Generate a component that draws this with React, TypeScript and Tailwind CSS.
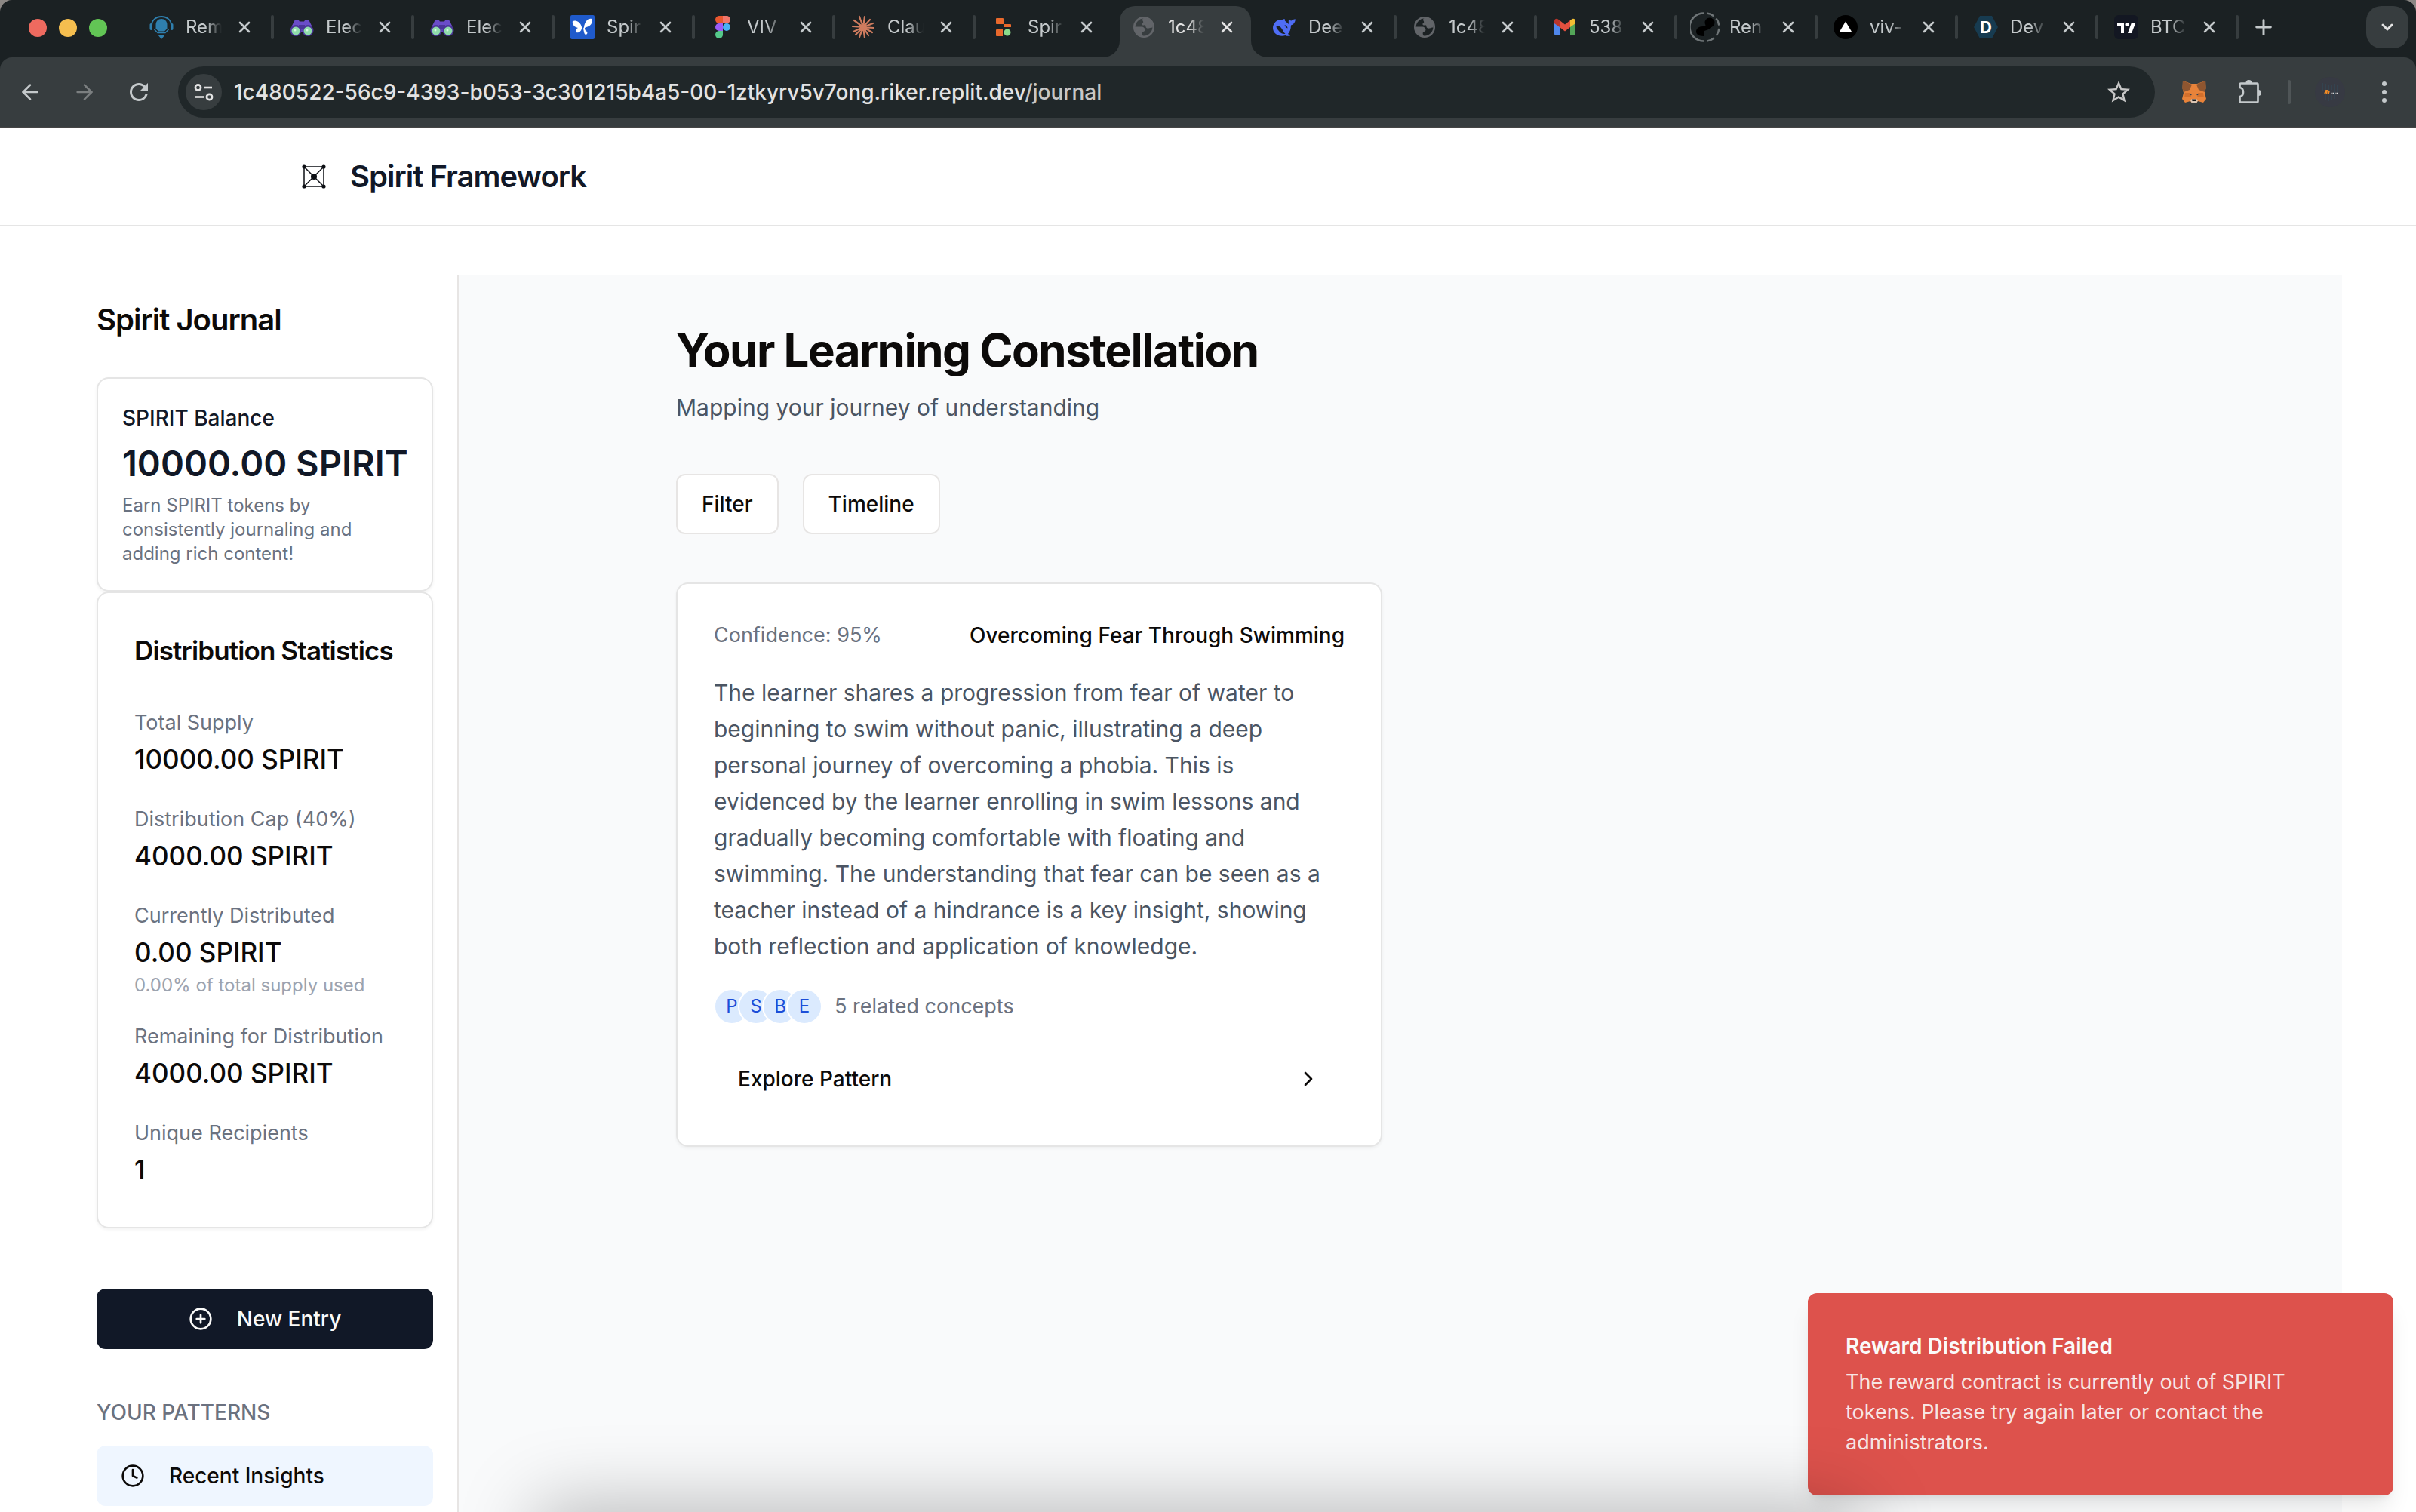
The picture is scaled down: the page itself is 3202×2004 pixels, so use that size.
import React from "react";
import {
  ArrowLeft,
  ArrowRight,
  ChevronDown,
  ChevronRight,
  CirclePlus,
  Clock,
  Plus,
  X,
} from "lucide-react";
import { MdStarBorder, MdRefresh } from "react-icons/md";

/* ---------- Favicons ---------- */

const iconClass = "h-8 w-8 shrink-0";

function KnightIcon() {
  return (
    <svg className={iconClass} viewBox="0 0 32 32" fill="none">
      <path d="M3 14C3 6.500 9 2 16 2s13 4.500 13 12" stroke="#2f7fae" strokeWidth="1.800" />
      <rect x="0.500" y="11" width="3.500" height="9" rx="1.700" fill="#2f7fae" />
      <rect x="28" y="11" width="3.500" height="9" rx="1.700" fill="#2f7fae" />
      <path d="M16 5c4.500 0 7.500 3.500 7.500 8v5l-3.500 3.500h-8L8.500 18v-5c0-4.500 3-8 7.500-8Z" fill="#2f7fae" />
      <path d="M6.500 19l4.500 4.500h10l4.500-4.500" stroke="#2f7fae" strokeWidth="1.500" />
      <path d="M11 26h10l-5 6Z" fill="#2f7fae" />
    </svg>
  );
}

function BinocularsIcon() {
  return (
    <svg className={iconClass} viewBox="0 0 32 32">
      <path
        d="M3 14 6 8c.5-2 4-3 6-1l1 1.500h6L20 7c2-2 5.500-1 6 1l3 6v8H3Z"
        fill="#6a4cc8"
      />
      <path d="M12 13h8v6h-8Z" fill="#4b3599" />
      <circle cx="8" cy="20.500" r="7.500" fill="#4b3599" />
      <circle cx="24" cy="20.500" r="7.500" fill="#4b3599" />
      <circle cx="8" cy="21" r="5.500" fill="#8fdcab" />
      <circle cx="24" cy="21" r="5.500" fill="#8fdcab" />
      <circle cx="7" cy="20" r="1.500" fill="#d8f7e3" />
      <circle cx="23" cy="20" r="1.500" fill="#d8f7e3" />
    </svg>
  );
}

function ButterflyIcon() {
  return (
    <svg className={iconClass} viewBox="0 0 32 32">
      <rect width="32" height="32" rx="2" fill="#1f5acb" />
      <path
        d="M15 16C14 10 8 6 3 8c-1 4 2 8 7 9-3 1-4 4-2 6 3 1 6-1 7-5Zm3 0c1-7 5-12 10-11 2 5-1 10-7 11l-2 1c0 3 1 4 3 5 1 2 0 4-2 4-2-1-2-4-3-8Z"
        fill="#fff"
      />
    </svg>
  );
}

function FigmaIcon() {
  return (
    <svg className={iconClass} viewBox="0 0 32 32">
      <path d="M16 1h-5a5 5 0 0 0 0 10h5Z" fill="#e8572f" />
      <path d="M16 1h5a5 5 0 0 1 0 10h-5Z" fill="#f1766a" />
      <path d="M16 11h-5a5 5 0 0 0 0 10h5Z" fill="#9b5cf6" />
      <circle cx="21" cy="16" r="5" fill="#49b1f5" />
      <path d="M16 21h-5a5 5 0 1 0 5 5Z" fill="#55c98b" />
    </svg>
  );
}

function BurstIcon() {
  return (
    <svg className={iconClass} viewBox="0 0 32 32" stroke="#cf7c5f" strokeWidth="2.200" strokeLinecap="round">
      <path d="M16 16 11 2M16 16 18 2M16 16l9-10M16 16l13-5M16 16l14 1M16 16l12 7M16 16l7 11M16 16l2 14M16 16l-5 13M16 16 6 26M16 16 3 22M16 16 2 15M16 16 4 7" />
      <circle cx="16" cy="16" r="3" fill="#cf7c5f" />
    </svg>
  );
}

function BlocksIcon() {
  return (
    <svg className={iconClass} viewBox="0 0 32 32">
      <path d="M7 4h8a1 1 0 0 1 1 1v7H7a1 1 0 0 1-1-1V5a1 1 0 0 1 1-1Z" fill="#e9692c" />
      <path d="M16 12h9a1 1 0 0 1 1 1v3H16Z" fill="#e9692c" />
      <path d="M7 19h8v9H7a1 1 0 0 1-1-1v-7a1 1 0 0 1 1-1Z" fill="#e9692c" />
      <circle cx="21" cy="23" r="4.500" fill="#8bdc8b" />
    </svg>
  );
}

function GlobeIcon() {
  return (
    <svg className={iconClass} viewBox="0 0 32 32" fill="none">
      <circle cx="16" cy="16" r="12.700" stroke="#626569" strokeWidth="2.600" />
      <path
        d="M17 3.500c-3 1-3.500 2.500-2.500 4s1 2.500-.5 3.500 0 3 2 2.500 2.500.5 2.500 2 2 2.500 4 2 3-1 5-1C29 9 24 4 17 3.500Z"
        fill="#626569"
      />
      <path
        d="M3.500 15.500H13c2.500 0 4.500 2 4.500 4s-2 2.500-3 3-1 2.500-.5 3.500l1 2.500C8 28 3.500 23 3.500 15.500Z"
        fill="#626569"
      />
    </svg>
  );
}

function WhaleIcon() {
  return (
    <svg className={iconClass} viewBox="0 0 32 32">
      <path
        d="M3 11c2-3.500 6-5.500 10-4.500 1-1 2.500-1.500 4-1-.7 1-.3 2 1 3 1.500 1.200 3 3 4.500 3.500-1-2.500-1-5 .2-7.500.3 2 1.300 3 2.800 3 1.500-1.500 3-2 5.500-2-.5 4-2.500 7-6 8-.2 5-1.500 9-4 11.500l3 2.500c-2 .6-4.500.5-6.500-.5C9.500 29.500 1 25 1 17c0-2.500.8-4.500 2-6Z"
        fill="#4f6df5"
      />
      <path d="M5.500 14.500c3.500-1 6.500 1.500 8.500 5.500 1 2 2.500 4 3.500 5-3.500.5-6.500-1-9-4.500-1.500-2-3-3-3-6Z" fill="#1b2123" />
      <path d="M16.500 13c2.500.5 4 2.500 4 4.500-1.500-.5-3-2-4-4.500Z" fill="#1b2123" />
    </svg>
  );
}

function MailIcon() {
  return (
    <svg className={iconClass} viewBox="0 0 32 32">
      <path d="M2 10v15a2 2 0 0 0 2 2h5V14Z" fill="#4f87ec" />
      <path d="M30 10v15a2 2 0 0 1-2 2h-5V14Z" fill="#53a658" />
      <path d="M2 8c0-3 3-4 5-2.500L9 7v9l-7-5Z" fill="#b9342a" />
      <path d="M30 8c0-3-3-4-5-2.500L23 7v9l7-5Z" fill="#f1bd33" />
      <path d="M9 7l7 5.500L23 7v9l-7 5.500L9 16Z" fill="#e2503f" />
    </svg>
  );
}

function LoadingIcon() {
  return (
    <svg className="-mx-1 h-10 w-10 shrink-0" viewBox="0 0 40 40" fill="none">
      <path d="M18 1.500A18.500 18.500 0 0 0 18 38.500" stroke="#6f7577" strokeWidth="2.500" />
      <path
        d="M22 1.500A18.500 18.500 0 0 1 38.500 20 18.500 18.500 0 0 1 22 38.500"
        stroke="#6f7577"
        strokeWidth="2.500"
        strokeDasharray="10 4.500"
      />
      <circle cx="26" cy="14" r="6.500" fill="#000" />
      <path d="M21 15c0 3-1 4-4 4-6 0-9 3-9 7 0 3 3 6 10 6l1-7c4-1 8-3 9-6Z" fill="#000" />
    </svg>
  );
}

function TriangleIcon() {
  return (
    <svg className={iconClass} viewBox="0 0 32 32">
      <circle cx="16" cy="16" r="16" fill="#000" />
      <path d="M16 8.500 24 22H8Z" fill="#fff" />
    </svg>
  );
}

function HexIcon() {
  return (
    <span className="relative flex h-8 w-8 shrink-0 items-center justify-center">
      <svg className="absolute inset-0 h-8 w-8" viewBox="0 0 32 32">
        <path d="M8 1h16l8 15-8 15H8L0 16Z" fill="#173b50" />
      </svg>
      <span className="relative text-[22px] leading-8 font-bold text-white">D</span>
    </span>
  );
}

function ChartLogoIcon() {
  return (
    <svg className={iconClass} viewBox="0 0 32 32">
      <rect width="32" height="32" rx="6" fill="#131722" />
      <path d="M4 10h9v14H9v-9H4Z" fill="#fff" />
      <circle cx="17" cy="12.500" r="2.500" fill="#fff" />
      <path d="M23 10h5.500L23 24h-5Z" fill="#fff" />
    </svg>
  );
}

/* ---------- Toolbar icons ---------- */

function FoxIcon() {
  return (
    <svg className="h-8 w-8" viewBox="0 0 32 32">
      <path d="M1 1l11 4h8l11-4 .5 10-1.500 6 2 8-4 5-7-2-2 2.500h-6L11 28l-7 2-4-5 2-8-1.500-6Z" fill="#e8833a" />
      <path d="M1 1l12 5-3 7-8 3-1.500-5Z" fill="#8f5630" />
      <path d="M31 1 19 6l3 7 8 3 1.500-5Z" fill="#8f5630" />
      <path d="M4 17l7 0 1 6-9 0Zm24 0-7 0-1 6 9 0Z" fill="#d4702c" />
      <path d="M9 18l4 .5-1 2Zm14 0-4 .5 1 2Z" fill="#2b3f52" />
      <path d="M11 27l2-2h6l2 2-2 4h-6Z" fill="#d8c5b4" />
      <path d="M13 25.500h6l-.5 2.500h-5Z" fill="#161616" />
    </svg>
  );
}

function PuzzleIcon() {
  return (
    <svg className="h-9 w-9" viewBox="0 0 36 36">
      <path
        d="M4.500 12V8a1.500 1.500 0 0 1 1.500-1.500h21A1.500 1.500 0 0 1 28.500 8v22a1.500 1.500 0 0 1-1.500 1.500H6A1.500 1.500 0 0 1 4.500 30v-6c6-1 6-11 0-12Z"
        fill="none"
        stroke="#c4c9cb"
        strokeWidth="2.700"
        strokeLinejoin="round"
      />
      <path d="M12.500 6a4 4 0 0 1 8 0ZM29 15a4 4 0 0 1 0 8Z" fill="#c4c9cb" />
    </svg>
  );
}

function SiteInfoIcon() {
  return (
    <svg className="h-7 w-7" viewBox="0 0 28 28" fill="none" stroke="#e3e3e3" strokeWidth="2.600">
      <circle cx="6.500" cy="8" r="3.600" />
      <path d="M14 8h11" />
      <circle cx="21.500" cy="20.500" r="3.600" />
      <path d="M3 20.500h11" />
    </svg>
  );
}

function NodesLogo() {
  return (
    <svg className="h-8 w-8" viewBox="0 0 32 32" fill="none" stroke="#0c0f14" strokeWidth="1.500">
      <path d="M3 3h26v26H3ZM3 3l26 26M29 3 3 29" />
      <g fill="#0c0f14" stroke="none">
        <circle cx="3" cy="3" r="2.600" />
        <circle cx="29" cy="3" r="2.600" />
        <circle cx="3" cy="29" r="2.600" />
        <circle cx="29" cy="29" r="2.600" />
        <circle cx="16" cy="16" r="4" />
      </g>
    </svg>
  );
}

/* ---------- Browser chrome ---------- */

type TabData = { title: string; icon: () => React.ReactElement; active?: boolean; divider?: boolean };

const tabs: TabData[] = [
  { title: "Rem", icon: KnightIcon, divider: true },
  { title: "Elec", icon: BinocularsIcon, divider: true },
  { title: "Elec", icon: BinocularsIcon, divider: true },
  { title: "Spir", icon: ButterflyIcon, divider: true },
  { title: "VIV", icon: FigmaIcon, divider: true },
  { title: "Clau", icon: BurstIcon, divider: true },
  { title: "Spir", icon: BlocksIcon },
  { title: "1c48", icon: GlobeIcon, active: true },
  { title: "Dee", icon: WhaleIcon, divider: true },
  { title: "1c48", icon: GlobeIcon, divider: true },
  { title: "538", icon: MailIcon, divider: true },
  { title: "Ren", icon: LoadingIcon, divider: true },
  { title: "viv-", icon: TriangleIcon, divider: true },
  { title: "Dev", icon: HexIcon, divider: true },
  { title: "BTC", icon: ChartLogoIcon, divider: true },
];

function Tab({ tab }: { tab: TabData }) {
  const Icon = tab.icon;
  return (
    <div className="relative flex h-full w-[186px] items-center pb-1 pl-[22px]">
      {tab.active && (
        <>
          <span className="absolute inset-x-[6px] top-2 bottom-0 rounded-t-[20px] bg-[#373d3f]" />
          <svg className="absolute bottom-0 -left-4 h-[22px] w-[22px]" viewBox="0 0 22 22">
            <path d="M22 0v22H0A22 22 0 0 0 22 0Z" fill="#373d3f" />
          </svg>
          <svg className="absolute -right-4 bottom-0 h-[22px] w-[22px]" viewBox="0 0 22 22">
            <path d="M0 0v22h22A22 22 0 0 1 0 0Z" fill="#373d3f" />
          </svg>
        </>
      )}
      <button className="relative flex items-center gap-4">
        <Icon />
        <span
          className={`w-12 text-left text-[24px] leading-8 whitespace-nowrap [mask-image:linear-gradient(to_right,#000_55%,transparent)] ${
            tab.active ? "text-[#e3e3e3]" : "text-[#c4c9cb]"
          }`}
        >
          {tab.title}
        </span>
      </button>
      <button
        aria-label={`Close ${tab.title}`}
        className={`relative ml-[18px] ${tab.active ? "text-[#e3e3e3]" : "text-[#c4c9cb]"}`}
      >
        <X className="h-6 w-6" strokeWidth={2.6} />
      </button>
      {tab.divider && <span className="absolute top-5 -right-px h-8 w-1 rounded-full bg-[#373d3f]" />}
    </div>
  );
}

function BrowserChrome() {
  return (
    <header className="shrink-0 bg-[#8b8784]">
      <div className="flex h-[76px] items-center rounded-t-[16px] bg-[#1b2123]">
        <div className="flex w-[176px] shrink-0 items-center gap-4 pb-0.5 pl-[38px]">
          <span className="h-6 w-6 rounded-full bg-[#ee6a5f]" />
          <span className="h-6 w-6 rounded-full bg-[#f5be4f]" />
          <span className="h-6 w-6 rounded-full bg-[#62c555]" />
        </div>
        <nav aria-label="Tabs" className="flex h-full">
          {tabs.map((tab, i) => (
            <Tab key={i} tab={tab} />
          ))}
        </nav>
        <button aria-label="New tab" className="ml-[18px] pb-1 text-[#c4c9cb]">
          <Plus className="h-8 w-8" strokeWidth={2.2} />
        </button>
        <button
          aria-label="Search tabs"
          className="mr-[10px] mb-1 ml-auto flex h-14 w-14 items-center justify-center rounded-[20px] bg-[#373d3f] text-[#e3e3e3]"
        >
          <ChevronDown className="h-6 w-6" strokeWidth={3} />
        </button>
      </div>
      <div className="bg-[#1b2123]">
        <div className="flex h-[94px] items-center rounded-t-[16px] border-b-2 border-[#454545] bg-[#373d3f] pr-[26px] pl-6">
          <button aria-label="Back" className="text-[#c4c9cb]">
            <ArrowLeft className="h-8 w-8" strokeWidth={2} />
          </button>
          <button aria-label="Forward" className="ml-10 text-[#7b7f80]">
            <ArrowRight className="h-8 w-8" strokeWidth={2} />
          </button>
          <button aria-label="Reload" className="ml-[38px] text-[#c4c9cb]">
            <MdRefresh className="h-9 w-9" />
          </button>
          <div className="ml-[34px] flex h-[68px] flex-1 items-center rounded-full bg-[#202729] pr-[30px] pl-2.5">
            <button
              aria-label="View site information"
              className="flex h-12 w-12 shrink-0 items-center justify-center rounded-full bg-[#373d3f]"
            >
              <SiteInfoIcon />
            </button>
            <div className="ml-4 flex-1 text-[28px] leading-10 font-medium text-[#e3e3e3]">
              1c480522-56c9-4393-b053-3c301215b4a5-00-1ztkyrv5v7ong.riker.replit.dev
              <span className="text-[#c7c7c7]">/journal</span>
            </div>
            <button aria-label="Bookmark this tab" className="text-[#c7c7c7]">
              <MdStarBorder className="h-9 w-9" />
            </button>
          </div>
          <button aria-label="Wallet" className="ml-9">
            <FoxIcon />
          </button>
          <button aria-label="Extensions" className="ml-10">
            <PuzzleIcon />
          </button>
          <span className="ml-8 h-8 w-1 rounded-full bg-[#4f5557]" />
          <button
            aria-label="Profile"
            className="ml-8 flex h-10 w-10 items-center justify-center rounded-full bg-[#373a43]"
          >
            <svg className="h-8 w-8" viewBox="0 0 32 32" fill="none">
              <path d="M6 4v10M10 5v21M14 6v8M14 20v8M18 6v7M18 20v6M22 5v20M26 6v10" stroke="#34434f" strokeWidth="2" />
              <path d="M9 18l2-4h1l-.5 4M15 14l-1 4" stroke="#f08a24" strokeWidth="1.800" />
              <path d="M17 17.500h9" stroke="#d8d8d8" strokeWidth="1.500" strokeDasharray="1.500 1" />
            </svg>
          </button>
          <button aria-label="Menu" className="ml-9 flex w-8 flex-col items-center gap-[5px]">
            <span className="h-1.5 w-1.5 rounded-full bg-[#c4c9cb]" />
            <span className="h-1.5 w-1.5 rounded-full bg-[#c4c9cb]" />
            <span className="h-1.5 w-1.5 rounded-full bg-[#c4c9cb]" />
          </button>
        </div>
      </div>
    </header>
  );
}

/* ---------- Page ---------- */

const stats = [
  { label: "Total Supply", value: "10000.00 SPIRIT" },
  { label: "Distribution Cap (40%)", value: "4000.00 SPIRIT" },
  { label: "Currently Distributed", value: "0.00 SPIRIT", note: "0.00% of total supply used" },
  { label: "Remaining for Distribution", value: "4000.00 SPIRIT" },
  { label: "Unique Recipients", value: "1" },
];

const cardClass = "rounded-2xl border-2 border-[#e5e5e5] bg-white shadow-[0_2px_4px_rgba(0,0,0,0.05)]";

function Sidebar() {
  return (
    <aside className="w-[512px] shrink-0 border-r-2 border-[#e7e5e4] bg-white p-8">
      <h2 className="text-[40px] leading-[56px] font-semibold tracking-tight text-[#0c0a09]">Spirit Journal</h2>

      <section className={`mt-12 ${cardClass} p-8`}>
        <h3 className="text-[28px] leading-10 font-medium text-[#111827]">SPIRIT Balance</h3>
        <p className="mt-2 text-[47px] leading-[64px] font-semibold whitespace-nowrap text-[#111827]">
          10000.00 SPIRIT
        </p>
        <p className="mt-2 text-[24px] leading-8 text-[#6b7280]">
          Earn SPIRIT tokens by consistently journaling and adding rich content!
        </p>
      </section>

      <section className={`${cardClass} p-12`}>
        <h3 className="text-[35px] leading-[56px] font-semibold tracking-tight whitespace-nowrap text-[#0c0a09]">
          Distribution Statistics
        </h3>
        <dl className="mt-12 flex flex-col gap-8">
          {stats.map((s) => (
            <div key={s.label}>
              <dt className="text-[27px] leading-10 whitespace-nowrap text-[#6b7280]">{s.label}</dt>
              <dd className="text-[35px] leading-[56px] font-medium text-[#0c0a09]">{s.value}</dd>
              {s.note && <dd className="text-[24px] leading-8 text-[#9ca3af]">{s.note}</dd>}
            </div>
          ))}
        </dl>
      </section>

      <button className="mt-20 flex h-20 w-full items-center justify-center gap-8 rounded-xl bg-[#111827] text-[28px] leading-10 font-medium text-[#fafaf9]">
        <CirclePlus className="h-8 w-8" />
        New Entry
      </button>

      <h4 className="mt-16 text-[28px] leading-10 font-medium text-[#6b7280]">YOUR PATTERNS</h4>
      <button className="mt-6 flex h-20 w-full items-center gap-8 rounded-xl bg-[#eff6ff] px-8 text-[28px] leading-10 font-medium text-[#0c0a09]">
        <Clock className="h-8 w-8" />
        Recent Insights
      </button>
    </aside>
  );
}

function PatternCard() {
  return (
    <article className={`${cardClass} p-12`}>
      <div className="flex items-center justify-between leading-10">
        <span className="text-[27px] text-[#6b7280]">Confidence: 95%</span>
        <span className="text-[28px] font-medium text-[#0c0a09]">Overcoming Fear Through Swimming</span>
      </div>
      <p className="mt-8 text-[30px] leading-[48px] text-[#4b5563]">
        The learner shares a progression from fear of water to beginning to swim without panic, illustrating a deep
        personal journey of overcoming a phobia. This is evidenced by the learner enrolling in swim lessons and
        gradually becoming comfortable with floating and swimming. The understanding that fear can be seen as a teacher
        instead of a hindrance is a key insight, showing both reflection and application of knowledge.
      </p>
      <div className="mt-8 flex items-center gap-4">
        <div className="flex -space-x-4">
          {["P", "S", "B", "E"].map((c) => (
            <span
              key={c}
              className="flex h-12 w-12 items-center justify-center rounded-full border-2 border-white bg-[#dbeafe] text-[24px] leading-8 text-[#1d4ed8]"
            >
              {c}
            </span>
          ))}
        </div>
        <span className="text-[27px] leading-10 text-[#6b7280]">5 related concepts</span>
      </div>
      <button className="mt-8 flex h-20 w-full items-center justify-between px-8 text-[28px] leading-10 font-medium text-[#0c0a09]">
        Explore Pattern
        <ChevronRight className="h-8 w-8" />
      </button>
    </article>
  );
}

function Constellation() {
  return (
    <main className="min-w-0 flex-1 bg-[#f9fafb]">
      <div className="mx-auto max-w-[2048px] p-16">
        <h1 className="text-[60px] leading-[72px] font-bold tracking-tight text-[#0c0a09]">
          Your Learning Constellation
        </h1>
        <p className="mt-4 text-[30px] leading-[48px] text-[#4b5563]">Mapping your journey of understanding</p>
        <div className="mt-16 flex gap-8">
          {["Filter", "Timeline"].map((label) => (
            <button
              key={label}
              className="h-20 rounded-xl border-2 border-[#e7e5e4] bg-white px-8 text-[28px] leading-10 font-medium text-[#0c0a09]"
            >
              {label}
            </button>
          ))}
        </div>
        <div className="mt-16 grid grid-cols-2 gap-12">
          <PatternCard />
        </div>
      </div>
    </main>
  );
}

function Toast() {
  return (
    <div
      role="alert"
      className="absolute right-[30px] bottom-[22px] w-[776px] rounded-xl border-2 border-[#dd524c] bg-[#dd524c] p-12 shadow-[0_20px_30px_-6px_rgba(0,0,0,0.1),0_8px_12px_-8px_rgba(0,0,0,0.1)]"
    >
      <p className="text-[28px] leading-10 font-semibold text-[#fafafa]">Reward Distribution Failed</p>
      <p className="mt-2 pr-12 text-[27px] leading-10 text-[#fafafa]/90">
        The reward contract is currently out of SPIRIT tokens. Please try again later or contact the administrators.
      </p>
    </div>
  );
}

export default function App() {
  return (
    <div className="relative flex h-screen flex-col overflow-hidden bg-white font-['Inter',sans-serif]">
      <BrowserChrome />
      <div className="flex h-[130px] shrink-0 items-center border-b-2 border-[#e5e5e5] pl-[400px]">
        <a href="#" className="flex items-center gap-8">
          <NodesLogo />
          <span className="text-[40px] leading-[56px] font-semibold tracking-tight text-[#111827]">
            Spirit Framework
          </span>
        </a>
      </div>
      <div className="flex min-h-0 flex-1 pt-16 pr-[98px] pl-24">
        <Sidebar />
        <Constellation />
      </div>
      <Toast />
      <div className="pointer-events-none absolute top-full right-[750px] left-[720px] h-24 shadow-[0_0_100px_10px_rgba(0,0,0,0.26)]" />
    </div>
  );
}
